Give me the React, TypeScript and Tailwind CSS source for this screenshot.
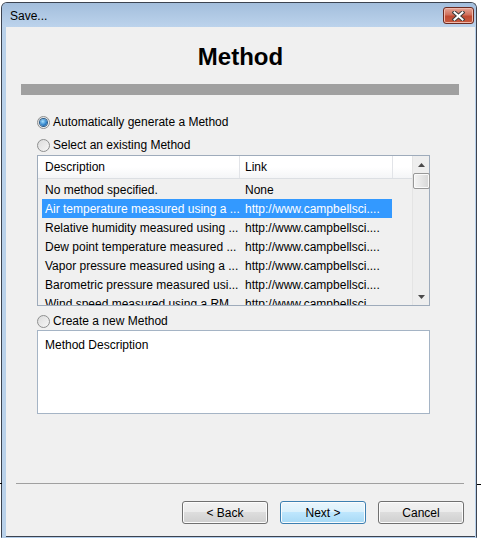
import React from 'react';

const rows: { desc: string; link: string }[] = [
  { desc: 'No method specified.', link: 'None' },
  { desc: 'Air temperature measured using a ...', link: 'http://www.campbellsci....' },
  { desc: 'Relative humidity measured using ...', link: 'http://www.campbellsci....' },
  { desc: 'Dew point temperature measured ...', link: 'http://www.campbellsci....' },
  { desc: 'Vapor pressure measured using a ...', link: 'http://www.campbellsci....' },
  { desc: 'Barometric pressure measured usi...', link: 'http://www.campbellsci....' },
  { desc: 'Wind speed measured using a RM...', link: 'http://www.campbellsci....' },
];

const Radio: React.FC<{ checked?: boolean; label: string }> = ({ checked, label }) => (
  <div className="flex items-center h-[16px] gap-[3px]">
    <span className="w-[13px] h-[13px] rounded-full border border-[#8e8f8f] bg-[linear-gradient(135deg,#dcdcdc,#f6f6f6)] flex items-center justify-center shrink-0">
      {checked && (
        <span className="w-[7px] h-[7px] rounded-full bg-[radial-gradient(circle_at_40%_35%,#a8e2ff,#2c7fc8_60%,#174b7c)] shadow-[0_0_0_1px_#2a5a86]" />
      )}
    </span>
    <span>{label}</span>
  </div>
);

const WinButton: React.FC<{ label: string; primary?: boolean }> = ({ label, primary }) => (
  <button
    className={`w-[86px] h-[23px] rounded-[3px] border text-[12px] text-black flex items-center justify-center shadow-[inset_0_0_0_1px_#fcfcfc] ${
      primary
        ? 'border-[#3c7fb1] bg-[linear-gradient(#eaf6fd,#d9f0fc_50%,#bee6fd_50%,#a7d9f5)]'
        : 'border-[#707070] bg-[linear-gradient(#f2f2f2,#ebebeb_50%,#dddddd_50%,#cfcfcf)]'
    }`}
  >
    {label}
  </button>
);

export default function App() {
  return (
    <div className="relative w-[481px] h-[542px] bg-white pl-[1px] pt-[2px] overflow-hidden font-['Liberation_Sans',Arial,sans-serif] text-[12px] text-black">
      {/* stray ticks outside the frame */}
      <span className="absolute left-0 top-[483px] w-[2px] h-[1px] bg-black" />
      <span className="absolute left-[477px] top-[484px] w-[4px] h-[1px] bg-black" />

      <div className="w-[476px] h-[536px] rounded-t-[6px] overflow-hidden border border-[#3c4350] border-b-[#b3cdea] bg-[#b9d1ea] flex flex-col">
        {/* Title bar */}
        <div className="h-[24px] shrink-0 flex items-start justify-between bg-[linear-gradient(#a3bedc,#bcd3ec)]">
          <span className="pl-[8px] pt-[5px] leading-[16px]">Save...</span>
          <div className="mt-[4px] mr-[2px] w-[31px] h-[17px] rounded-[3px] border border-[#6b2a20] bg-[linear-gradient(#e6a596,#d0705c_45%,#c04a32_55%,#c65a3f)] shadow-[inset_0_0_0_1px_#efb9ac] flex items-center justify-center">
            <svg width="13" height="10" viewBox="0 0 13 10">
              <path d="M2.5 1.5 L10.5 8.5 M10.5 1.5 L2.5 8.5" stroke="#3d3d3d" strokeWidth="4" strokeLinecap="square" />
              <path d="M2.5 1.5 L10.5 8.5 M10.5 1.5 L2.5 8.5" stroke="#ffffff" strokeWidth="2" strokeLinecap="square" />
            </svg>
          </div>
        </div>

        {/* Client area */}
        <div className="flex-1 ml-[4px] mr-[1px] bg-[#f0f0f0] border-b border-[#3c4350] flex flex-col">
          <h1 className="pt-[16px] text-center text-[24px] leading-[28px] font-bold">Method</h1>
          <div className="mt-[13px] ml-[15px] w-[438px] h-[11px] bg-[#a0a0a0]" />

          <div className="mt-[19px] ml-[31px] w-[393px] flex flex-col">
            <Radio checked label="Automatically generate a Method" />
            <div className="mt-[7px]">
              <Radio label="Select an existing Method" />
            </div>

            {/* Method list */}
            <div className="mt-[2px] h-[151px] border border-[#9eabbb] bg-[#f0f0f0] flex">
              <div className="flex-1 flex flex-col overflow-hidden">
                <div className="h-[23px] shrink-0 flex bg-[linear-gradient(#ffffff,#ffffff_50%,#f4f5f7)] border-b border-[#dcdfe3]">
                  <div className="w-[202px] pl-[7px] flex items-center border-r border-[#e2e4e8]">Description</div>
                  <div className="w-[153px] pl-[5px] flex items-center border-r border-[#e2e4e8]">Link</div>
                  <div className="flex-1" />
                </div>
                <div className="pt-[1px] flex flex-col">
                  {rows.map((r, i) => {
                    const selected = i === 1;
                    return (
                      <div
                        key={i}
                        className={`ml-[4px] w-[350px] h-[19px] shrink-0 flex items-center whitespace-nowrap ${
                          selected ? 'bg-[#3399ff] text-white' : ''
                        }`}
                      >
                        <div className="w-[200px] pl-[3px] overflow-hidden">{r.desc}</div>
                        <div className="flex-1 pl-[3px] overflow-hidden">{r.link}</div>
                      </div>
                    );
                  })}
                </div>
              </div>

              {/* Scrollbar */}
              <div className="w-[17px] shrink-0 bg-[#eeeeee] border-l border-[#e4e4e4] flex flex-col items-center">
                <div className="h-[17px] w-full flex items-center justify-center">
                  <svg width="7" height="4" viewBox="0 0 7 4">
                    <path d="M0 4 L3.5 0 L7 4 Z" fill="#4a4a4a" />
                  </svg>
                </div>
                <div className="w-[17px] h-[16px] rounded-[2px] border border-[#979797] bg-[linear-gradient(90deg,#f4f4f4,#e6e6e6_50%,#d6d6d6)] shadow-[inset_0_0_0_1px_#fafafa]" />
                <div className="flex-1" />
                <div className="h-[17px] w-full flex items-center justify-center">
                  <svg width="7" height="4" viewBox="0 0 7 4">
                    <path d="M0 0 L7 0 L3.5 4 Z" fill="#4a4a4a" />
                  </svg>
                </div>
              </div>
            </div>

            <div className="mt-[7px]">
              <Radio label="Create a new Method" />
            </div>
            <div className="mt-[1px] h-[84px] border border-[#a5b4c5] bg-white pl-[7px] pt-[6px] leading-[16px]">
              Method Description
            </div>
          </div>

          {/* Footer */}
          <div className="mt-auto">
            <div className="ml-[10px] mr-[11px] h-[1px] bg-[#a0a0a0]" />
            <div className="mt-[17px] mb-[12px] mr-[11px] flex justify-end gap-[12px]">
              <WinButton label="< Back" />
              <WinButton primary label="Next >" />
              <WinButton label="Cancel" />
            </div>
          </div>
        </div>
      </div>
    </div>
  );
}
